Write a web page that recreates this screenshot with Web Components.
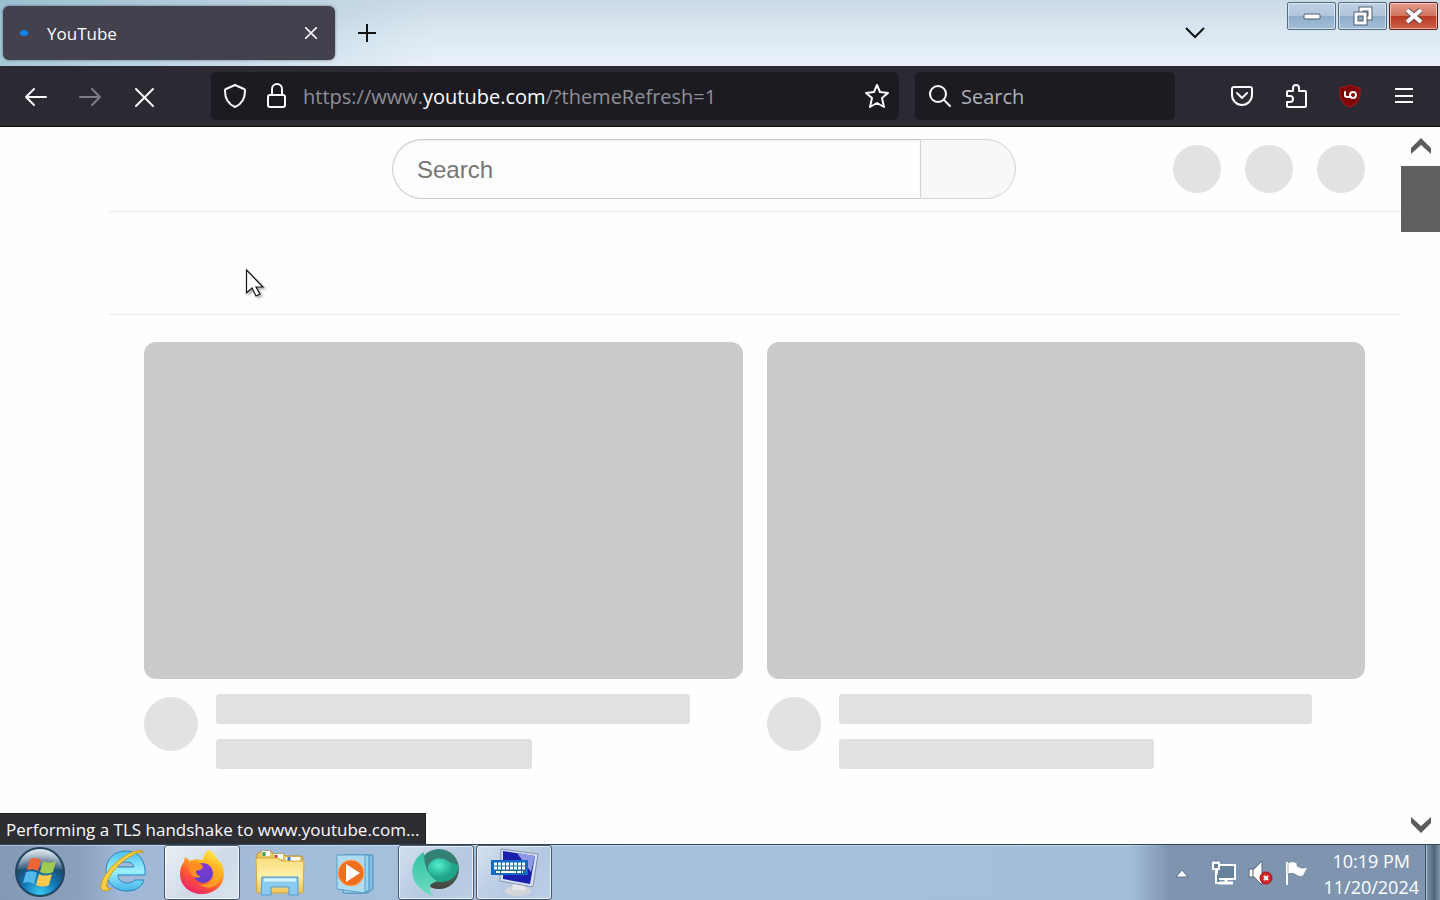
<!DOCTYPE html>
<html lang="en">
<head>
<meta charset="utf-8">
<title>YouTube</title>
<style>
  html, body {
    height: 100%;
    margin: 0;
  }

  body {
    font-family: "Open Sans", "Noto Sans", sans-serif;
    overflow: hidden;
  }
</style>
</head>
<body>
<desktop-screen>
  <tab-strip slot="window">
    <browser-tab label="YouTube"></browser-tab>
  </tab-strip>
  <nav-toolbar slot="window"></nav-toolbar>
  <page-view slot="window">
    <video-skeleton></video-skeleton>
    <video-skeleton></video-skeleton>
  </page-view>
  <task-bar slot="taskbar">
    <task-button label="Internet Explorer">
      <svg width="50" height="50" viewBox="0 0 50 50">
        <defs><linearGradient id="ie" x2="0" y2="1"><stop stop-color="#4cbdee"/><stop offset=".5" stop-color="#9cf0ff"/><stop offset="1" stop-color="#44b6ea"/></linearGradient></defs>
        <path d="M46 27H19c0 5 4 8 9 8 4 0 6-1 8-3h9c-3 8-9 11-17 11C16 43 7 35 7 23S15 3 27 3s20 9 19 24zM19 19h16c-1-4-4-5-8-5s-7 1-8 5z" fill="url(#ie)" stroke="#2a83bd"/>
        <path d="M45 5c-1-4-10-3-19 3C13 16 1 31 2 40c1 4 7 3 11 0-4 1-6 0-5-5C10 26 21 14 32 8c6-4 11-5 13-3z" fill="#f7d145" stroke="#cf9a18"/>
      </svg>
    </task-button>
    <task-button label="Firefox" active>
      <svg width="50" height="50" viewBox="0 0 50 50">
        <defs>
          <linearGradient id="fx" x1=".8" y1="0" x2=".25" y2="1"><stop stop-color="#fff04a"/><stop offset=".35" stop-color="#ffb321"/><stop offset=".65" stop-color="#ff5a33"/><stop offset="1" stop-color="#ea1f6e"/></linearGradient>
          <linearGradient id="fp" x2="0" y2="1"><stop stop-color="#8a35d8"/><stop offset="1" stop-color="#5a3fcd"/></linearGradient>
        </defs>
        <path d="M32 2c4 2 7 6 8 9 5 3 7 9 7 15 0 12-10 20-22 20S3 38 3 26c0-5 1-9 4-12l1-5 5 4c4-2 8-2 13-1 0-4 2-8 6-10z" fill="url(#fx)"/>
        <circle cx="26" cy="25" r="10" fill="url(#fp)"/>
        <path d="M12 15c5-2 10-1 14 3l-1 3-6 2c0 3 2 5 5 5-3 3-7 2-9-1-3-4-4-8-3-12z" fill="#ff8f22"/>
        <path d="M26 13c8 0 12 6 11 14-2 7-8 11-15 9 10 8 22 2 22-10 0-9-8-15-18-13z" fill="#ffb324" opacity=".7"/>
      </svg>
    </task-button>
    <task-button label="Windows Explorer">
      <svg width="52" height="50" viewBox="0 0 52 50">
        <defs><linearGradient id="fo" x2="0" y2="1"><stop stop-color="#f9dd80"/><stop offset=".5" stop-color="#ffefa6"/><stop offset="1" stop-color="#e9c65c"/></linearGradient></defs>
        <path d="M3 6l5-3h9l3 3h9l3 2h16l1 5v29H3z" fill="#eac564" stroke="#b99132"/>
        <path d="M8 3h8v5H8zM20 6h9v5h-9zM32 9h14v4H32z" fill="#fff"/>
        <path d="M10 4v4" stroke="#3b9d50" stroke-width="3"/>
        <path d="M22 7v4" stroke="#c2452d" stroke-width="3"/>
        <path d="M35 9v4" stroke="#3a76c4" stroke-width="3"/>
        <path d="M2 10h22l4 3h22l-1 32H3z" fill="url(#fo)" stroke="#d2aa43"/>
        <path d="M8 29h36v18H35v-8H17v8H7z" fill="#8ccaf0" stroke="#569bcb"/>
        <path d="M10 32h32" stroke="#d6f2ff" stroke-width="3"/>
      </svg>
    </task-button>
    <task-button label="Windows Media Player">
      <svg width="44" height="44" viewBox="0 0 44 44">
        <path d="M12 4h25v34l-5 4H12z" fill="#7dbfe3" stroke="#4a8fbe"/>
        <path d="M7 4h26v35l-5 3H7z" fill="#9bd3ef" stroke="#4a8fbe"/>
        <path d="M1 4h28v38L1 38z" fill="#b0dcf2" stroke="#5a9fc8"/>
        <circle cx="15" cy="22" r="13" fill="#ee6f1d" stroke="#ffad67"/>
        <path d="M10 13l14 9-14 9z" fill="#fff"/>
      </svg>
    </task-button>
    <task-button label="Browser" active>
      <svg width="52" height="50" viewBox="0 0 52 50">
        <defs>
          <radialGradient id="te" cx=".35" cy=".3"><stop stop-color="#55efcf"/><stop offset="1" stop-color="#1fa58a"/></radialGradient>
          <linearGradient id="ring" x2="0" y2="1"><stop stop-color="#2f8577"/><stop offset=".5" stop-color="#3e7a70"/><stop offset="1" stop-color="#493f3c"/></linearGradient>
          <linearGradient id="tail" x2="0" y2="1"><stop stop-color="#2fc2a2"/><stop offset="1" stop-color="#6fdcc2"/></linearGradient>
        </defs>
        <circle cx="29" cy="21" r="20" fill="url(#ring)"/>
        <path d="M18 18c4-8 13-10 20-5 4 3 7 2 10 4 0 13-10 18-19 17-7-1-12-8-11-16z" fill="url(#te)"/>
        <path d="M14 4C0 12-1 30 9 39c4 4 8 7 14 9-3-4-4-8-2-12l6-3c-9-5-13-15-13-29z" fill="url(#tail)"/>
      </svg>
    </task-button>
    <task-button label="On-Screen Keyboard" active>
      <svg width="50" height="50" viewBox="0 0 50 50">
        <ellipse cx="29" cy="43" rx="13" ry="5" fill="#d4d6da"/>
        <path d="M24 33h11l2 9H23z" fill="#e6e7ea"/>
        <path d="M12 1l37 5-5 33-33-6z" fill="#d8e0f1" stroke="#8492b5"/>
        <path d="M14 3l32 5-5 28-27-5z" fill="#1a1fae"/>
        <path d="M28 5l18 3-4 16z" fill="#8c9ae8"/>
        <path d="M2 12h37v15H2z" fill="#126ac0"/>
        <path d="M5 16h31M5 20h31" stroke="#fff" stroke-width="3" stroke-dasharray="3 1"/>
        <path d="M7 24h27" stroke="#fff" stroke-width="2" stroke-dasharray="4 1 15 1"/>
      </svg>
    </task-button>
  </task-bar>
</desktop-screen>

<script>
class DesktopScreen extends HTMLElement {
  constructor() {
    super();
    this.attachShadow({mode: 'open'}).innerHTML = `
      <style>
        :host {
          display: flex;
          flex-direction: column;
          height: 100vh;
          position: relative;
          background: #fefefe;
        }

        .window {
          flex: 1;
          min-height: 0;
          display: flex;
          flex-direction: column;
        }

        /* mouse pointer floats over the page */
        .pointer {
          position: absolute;
          left: 245px;
          top: 267px;
          pointer-events: none;
          filter: drop-shadow(2px 2px 1px rgba(0, 0, 0, 0.3));
        }
      </style>
      <div class="window"><slot name="window"></slot></div>
      <slot name="taskbar"></slot>
      <svg class="pointer" width="20" height="31" viewBox="0 0 20 31">
        <path d="M1.500 3v23l5.500-5 4 8 4-2-4-7h7z" fill="#fff" stroke="#111" stroke-width="1.200"/>
      </svg>
    `;
  }
}

class TabStrip extends HTMLElement {
  constructor() {
    super();
    this.attachShadow({mode: 'open'}).innerHTML = `
      <style>
        :host {
          display: flex;
          align-items: center;
          box-sizing: border-box;
          flex: none;
          height: 66px;
          padding: 0 2px 0 3px;
          background:
            linear-gradient(to right, rgba(120, 175, 195, 0.6), rgba(150, 190, 210, 0.4) 16%, rgba(200, 220, 235, 0) 30%),
            linear-gradient(to bottom, #cbdae6, #dae6f0 45%, #e2edf6 75%, #ebf0f9);
        }

        button {
          display: flex;
          align-items: center;
          justify-content: center;
          padding: 0;
          border: none;
          background: none;
        }

        .tool {
          width: 48px;
          height: 48px;
        }

        .new {
          margin: 0 auto 0 8px;
        }

        .controls {
          display: flex;
          align-self: flex-start;
          gap: 2px;
          margin: 2px 0 0 68px;
        }

        .controls button {
          box-sizing: border-box;
          width: 49px;
          height: 28px;
          border: 1px solid #536c86;
          border-radius: 2px;
          box-shadow: inset 0 0 0 1px rgba(255, 255, 255, 0.5);
          background: linear-gradient(#bdd0e5, #b0c6dc 48%, #8facc9 50%, #a3bfd9);
        }

        .controls .close {
          border-color: #5f2018;
          background: linear-gradient(#e09a8a, #d57761 48%, #b93820 50%, #cc604a);
        }
      </style>
      <slot></slot>
      <button class="tool new" type="button" aria-label="New tab">
        <svg width="20" height="20" viewBox="0 0 20 20"><path d="M10 1v18M1 10h18" stroke="#111" stroke-width="2"/></svg>
      </button>
      <button class="tool" type="button" aria-label="List all tabs">
        <svg width="20" height="14" viewBox="0 0 20 14"><path d="M1 2l9 9 9-9" fill="none" stroke="#111" stroke-width="2"/></svg>
      </button>
      <div class="controls">
        <button type="button" aria-label="Minimize">
          <svg width="18" height="8" viewBox="0 0 18 8"><rect x="1" y="2" width="16" height="5" rx="1" fill="#fff" stroke="#4c5c70"/></svg>
        </button>
        <button type="button" aria-label="Restore">
          <svg width="22" height="22" viewBox="0 0 22 22">
            <path d="M9 4h9v9H9z" fill="none" stroke="#4c5c70" stroke-width="5"/>
            <path d="M9 4h9v9H9z" fill="none" stroke="#fff" stroke-width="3"/>
            <path d="M4 9h9v9H4z" fill="#8fa9c6" stroke="#4c5c70" stroke-width="5"/>
            <path d="M4 9h9v9H4z" fill="none" stroke="#fff" stroke-width="3"/>
          </svg>
        </button>
        <button class="close" type="button" aria-label="Close">
          <svg width="20" height="18" viewBox="0 0 20 18">
            <path d="M3 3l14 12M17 3L3 15" stroke="#6b4a48" stroke-width="6"/>
            <path d="M3 3l14 12M17 3L3 15" stroke="#fff" stroke-width="4"/>
          </svg>
        </button>
      </div>
    `;
  }
}

class BrowserTab extends HTMLElement {
  constructor() {
    super();
    this.attachShadow({mode: 'open'}).innerHTML = `
      <style>
        :host {
          display: flex;
          align-items: center;
          box-sizing: border-box;
          width: 332px;
          height: 54px;
          padding: 0 12px 0 17px;
          border-radius: 6px;
          background: #42414d;
          box-shadow: 0 0 3px rgba(60, 50, 80, 0.6);
          color: #fbfbfe;
          font-size: 17px;
        }

        .busy {
          width: 8px;
          height: 6px;
          border-radius: 50%;
          background: #1683e8;
        }

        #label {
          flex: 1;
          margin-left: 19px;
        }

        button {
          display: flex;
          padding: 6px;
          border: none;
          background: none;
        }
      </style>
      <span class="busy"></span>
      <span id="label"></span>
      <button type="button" aria-label="Close tab">
        <svg width="12" height="12" viewBox="0 0 12 12"><path d="M0 0l12 12M12 0L0 12" stroke="#fbfbfe" stroke-width="1.600"/></svg>
      </button>
    `;
  }

  connectedCallback() {
    this.shadowRoot.querySelector('#label').textContent = this.getAttribute('label');
  }
}

class NavToolbar extends HTMLElement {
  constructor() {
    super();
    this.attachShadow({mode: 'open'}).innerHTML = `
      <style>
        :host {
          display: flex;
          align-items: center;
          box-sizing: border-box;
          flex: none;
          gap: 40px;
          height: 61px;
          padding: 0 9px;
          border-bottom: 1px solid #0c0c0d;
          background: #2b2a33;
          color: #fbfbfe;
        }

        svg {
          fill: none;
          stroke: #fbfbfe;
          stroke-width: 2;
          stroke-linecap: round;
          stroke-linejoin: round;
        }

        button {
          display: flex;
          align-items: center;
          justify-content: center;
          padding: 0;
          border: none;
          background: none;
        }

        .group {
          display: flex;
        }

        .group button {
          width: 54px;
          height: 48px;
        }

        .group button:disabled {
          opacity: 0.4;
        }

        .fields {
          flex: 1;
          min-width: 0;
          display: flex;
          gap: 16px;
        }

        .field {
          flex: 668;
          min-width: 0;
          display: flex;
          align-items: center;
          box-sizing: border-box;
          height: 48px;
          padding: 0 10px;
          border-radius: 6px;
          background: #1c1b22;
        }

        .field.search {
          flex: 240;
        }

        .field button {
          margin-right: 13px;
        }

        .field .star {
          margin-right: 0;
        }

        .url {
          flex: 1;
          padding-top: 2px;
          white-space: nowrap;
          font-size: 20px;
          line-height: 28px;
          color: #8f8f98;
          text-decoration: none;
        }

        .url b {
          font-weight: 400;
          color: #fbfbfe;
        }

        input {
          flex: 1;
          min-width: 0;
          padding: 2px 0 0;
          border: none;
          outline: none;
          background: none;
          font: 20px "Open Sans", "Noto Sans", sans-serif;
          line-height: 28px;
          color: #fbfbfe;
        }

        input::placeholder {
          color: #b0b0b8;
          opacity: 1;
        }

        .field.search button {
          margin-right: 8px;
        }
      </style>
      <div class="group">
        <button type="button" aria-label="Back"><svg width="24" height="24" viewBox="0 0 24 24"><path d="M22 13H2M10 5l-8 8 8 8"/></svg></button>
        <button type="button" aria-label="Forward" disabled><svg width="24" height="24" viewBox="0 0 24 24"><path d="M2 13h20M14 5l8 8-8 8"/></svg></button>
        <button type="button" aria-label="Stop"><svg width="24" height="24" viewBox="0 0 24 24"><path d="M4 5l17 17M21 5L4 22"/></svg></button>
      </div>
      <div class="fields">
        <div class="field">
          <button type="button" aria-label="Tracking protection"><svg width="28" height="28" viewBox="0 0 28 28"><path d="M14 3l9 4c1 0 1 1 1 2 0 8-3 13-10 16C7 22 4 17 4 9c0-1 0-2 1-2z"/></svg></button>
          <button type="button" aria-label="Site security"><svg width="28" height="28" viewBox="0 0 28 28"><rect x="6" y="13" width="17" height="12" rx="2"/><path d="M10 13V7a5 5 0 0 1 10 0v6"/></svg></button>
          <a class="url" href="#">https://www.<b>youtube.com</b>/?themeRefresh=1</a>
          <button class="star" type="button" aria-label="Bookmark this page"><svg width="26" height="26" viewBox="0 0 26 26"><path d="M14 2l3 7 8 1-6 5 2 9-7-4-7 4 2-9-6-5 8-1z"/></svg></button>
        </div>
        <div class="field search">
          <button type="button" aria-label="Search engine"><svg width="28" height="28" viewBox="0 0 28 28"><circle cx="13" cy="12" r="8"/><path d="M19 18l6 6"/></svg></button>
          <input type="text" placeholder="Search" aria-label="Search the web">
        </div>
      </div>
      <div class="group">
        <button type="button" aria-label="Save to Pocket"><svg width="24" height="24" viewBox="0 0 24 24"><path d="M4 3h16c1 0 2 1 2 2v6a10 10 0 0 1-20 0V5c0-1 1-2 2-2z"/><path d="M7 9l5 5 5-5"/></svg></button>
        <button type="button" aria-label="Extensions"><svg width="26" height="26" viewBox="0 0 26 26"><path d="M5 8h5V5a3 3 0 0 1 6 0v3h6a1 1 0 0 1 1 1v14a1 1 0 0 1-1 1H5a1 1 0 0 1-1-1v-4h3a3 3 0 0 0 0-6H4V9a1 1 0 0 1 1-1z"/></svg></button>
        <button type="button" aria-label="uBlock Origin"><svg width="26" height="26" viewBox="0 0 26 26"><path d="M13 2c3 2 6 3 10 3 0 9-1 15-10 19C4 20 3 14 3 5c4 0 7-1 10-3z" fill="#800000" stroke="#8d1717"/><path d="M8 9v3a2 2 0 0 0 2 2h4"/><circle cx="16" cy="12" r="3"/></svg></button>
        <button type="button" aria-label="Menu"><svg width="24" height="24" viewBox="0 0 24 24"><path d="M3 5h18M3 12h18M3 18h18" stroke-linecap="butt"/></svg></button>
      </div>
    `;
  }
}

class PageView extends HTMLElement {
  constructor() {
    super();
    this.attachShadow({mode: 'open'}).innerHTML = `
      <style>
        :host {
          flex: 1;
          min-height: 0;
          display: flex;
          position: relative;
          background: #fefefe;
        }

        .page {
          flex: 1;
          min-width: 0;
          overflow: hidden;
        }

        header {
          display: grid;
          grid-template-columns: 1fr minmax(0, 624px) 1fr;
          align-items: center;
          height: 84px;
          padding: 0 36px 0 43px;
        }

        form {
          grid-column: 2;
          display: flex;
        }

        input {
          flex: 1;
          min-width: 0;
          box-sizing: border-box;
          height: 60px;
          padding: 2px 24px 0;
          border: 1px solid #ccc;
          border-right: none;
          border-radius: 30px 0 0 30px;
          outline: none;
          background: #fefefe;
          box-shadow: inset 0 1px 2px #eee;
          font: 24px "Liberation Sans", Arial, sans-serif;
        }

        input::placeholder {
          color: #757575;
          opacity: 1;
        }

        form button {
          width: 96px;
          border: 1px solid #d3d3d3;
          border-radius: 0 30px 30px 0;
          background: #f8f8f8;
        }

        .account {
          display: flex;
          justify-content: flex-end;
          gap: 24px;
        }

        .account span {
          width: 48px;
          height: 48px;
          border-radius: 50%;
          background: #e2e2e2;
        }

        .chips {
          height: 102px;
          margin-left: 108px;
          border: solid #ececec;
          border-width: 1px 0;
        }

        .videos {
          display: grid;
          grid-template-columns: 1fr 1fr;
          gap: 24px;
          margin-left: 108px;
          padding: 27px 36px 0;
        }

        .scrollbar {
          flex: none;
          display: flex;
          flex-direction: column;
          width: 39px;
        }

        .scrollbar button {
          display: flex;
          align-items: center;
          justify-content: center;
          height: 39px;
          padding: 0;
          border: none;
          background: none;
        }

        .thumb {
          height: 66px;
          margin-bottom: auto;
          background: #606060;
        }

        .status {
          position: absolute;
          left: 0;
          bottom: 0;
          box-sizing: border-box;
          height: 31px;
          padding: 0 6px;
          border: solid #1d1d22;
          border-width: 1px 1px 0 0;
          background: #2e2e32;
          color: #fbfbfe;
          font-size: 17px;
          line-height: 31px;
          white-space: nowrap;
        }
      </style>
      <div class="page">
        <header>
          <form>
            <input type="text" placeholder="Search" aria-label="Search YouTube">
            <button type="button" aria-label="Search"></button>
          </form>
          <div class="account"><span></span><span></span><span></span></div>
        </header>
        <div class="chips"></div>
        <div class="videos"><slot></slot></div>
      </div>
      <div class="scrollbar">
        <button type="button" aria-label="Scroll up"><svg width="20" height="18" viewBox="0 0 20 18"><path d="M10 0l10 10v6L10 7 0 16v-6z" fill="#5c5c5c"/></svg></button>
        <div class="thumb"></div>
        <button type="button" aria-label="Scroll down"><svg width="20" height="18" viewBox="0 0 20 18"><path d="M10 17l10-10V1L10 10 0 1v6z" fill="#5c5c5c"/></svg></button>
      </div>
      <div class="status">Performing a TLS handshake to www.youtube.com...</div>
    `;
  }
}

class VideoSkeleton extends HTMLElement {
  constructor() {
    super();
    this.attachShadow({mode: 'open'}).innerHTML = `
      <style>
        :host {
          display: block;
        }

        .thumbnail {
          aspect-ratio: 16 / 9;
          border-radius: 12px;
          background: #cbcbcb;
        }

        .details {
          display: flex;
          gap: 18px;
          padding-top: 15px;
        }

        .avatar {
          width: 54px;
          height: 54px;
          margin-top: 3px;
          border-radius: 50%;
          background: #e2e2e2;
        }

        .meta {
          flex: 1;
        }

        .line {
          width: 90%;
          height: 30px;
          margin-bottom: 15px;
          border-radius: 3px;
          background: #e1e1e1;
        }

        .line.short {
          width: 60%;
        }
      </style>
      <div class="thumbnail"></div>
      <div class="details">
        <div class="avatar"></div>
        <div class="meta">
          <div class="line"></div>
          <div class="line short"></div>
        </div>
      </div>
    `;
  }
}

class TaskButton extends HTMLElement {
  constructor() {
    super();
    this.attachShadow({mode: 'open'}).innerHTML = `
      <style>
        :host {
          display: block;
          width: 76px;
        }

        button {
          display: flex;
          align-items: center;
          justify-content: center;
          box-sizing: border-box;
          width: 100%;
          height: 55px;
          padding: 0;
          border: 1px solid transparent;
          border-radius: 3px;
          background: none;
        }

        :host([active]) button {
          border-color: #46586e;
          box-shadow: inset 0 0 0 1px rgba(255, 255, 255, 0.7);
          background: linear-gradient(135deg, #d3dfef, #b4c8e0 60%, #bccfe5);
        }

        :host([label="Firefox"]) button {
          background: linear-gradient(135deg, #eaeff6, #cfdae7 60%, #dbe4ee);
        }
      </style>
      <button type="button"><slot></slot></button>
    `;
  }

  connectedCallback() {
    this.shadowRoot.querySelector('button').setAttribute('aria-label', this.getAttribute('label'));
  }
}

class TaskBar extends HTMLElement {
  constructor() {
    super();
    this.attachShadow({mode: 'open'}).innerHTML = `
      <style>
        :host {
          display: flex;
          box-sizing: border-box;
          flex: none;
          height: 56px;
          border-top: 1px solid #33475c;
          box-shadow: inset 0 1px 0 rgba(255, 255, 255, 0.35);
          background: linear-gradient(to right, #8399b5, #8ba0bd 80px, #a0b8d6 120px, #a6bfdc 400px, #a5bfdb);
        }

        button {
          padding: 0;
          border: none;
          background: none;
        }

        .start {
          display: flex;
          align-items: center;
          justify-content: center;
          width: 80px;
        }

        .tasks {
          flex: 1;
          display: flex;
          gap: 2px;
          padding-left: 6px;
        }

        .tray {
          display: flex;
          align-items: center;
          gap: 10px;
          padding: 0 6px 0 46px;
          background: linear-gradient(to right, rgba(127, 149, 175, 0), #7f95af 40px);
        }

        .tray button {
          display: flex;
        }

        .more {
          margin-right: 12px;
        }

        .clock {
          margin-left: 4px;
          padding-top: 2px;
          text-align: center;
          color: #fff;
          font-size: 18px;
          line-height: 26px;
        }

        .desktop {
          width: 15px;
          border: 1px solid #3c5266;
          border-width: 0 0 0 1px;
          box-shadow: inset 1px 0 0 #a9bccd;
          background: linear-gradient(to right, #7f97ab, #4f6679 60%, #8398a9);
        }
      </style>
      <button class="start" type="button" aria-label="Start">
        <svg width="52" height="52" viewBox="0 0 52 52">
          <defs>
            <radialGradient id="orb" cx=".5" cy=".95" r=".9"><stop stop-color="#37c8f5"/><stop offset=".4" stop-color="#1278b5"/><stop offset=".75" stop-color="#1d4568"/><stop offset="1" stop-color="#7ba0b9"/></radialGradient>
            <linearGradient id="shine" x2="0" y2="1"><stop stop-color="#fff" stop-opacity=".75"/><stop offset="1" stop-color="#fff" stop-opacity=".1"/></linearGradient>
          </defs>
          <circle cx="26" cy="25" r="24" fill="url(#orb)" stroke="#24445e" stroke-width="2"/>
          <path d="M4 23a22 21 0 0 1 44 0c-12-4-30-4-44 0z" fill="url(#shine)"/>
          <path d="M16 12c4-2 8-1 11 1l-3 11c-4-2-7-2-11-1z" fill="#ee6536"/>
          <path d="M29 14c4 2 8 2 13 0l-3 11c-5 2-9 2-13 0z" fill="#a0ca51"/>
          <path d="M12 25c4-1 8-1 11 1l-3 11c-4-2-7-2-11-1z" fill="#55b8ec"/>
          <path d="M25 27c4 2 8 2 13 0l-3 11c-5 2-9 2-13 0z" fill="#fdc94a"/>
        </svg>
      </button>
      <div class="tasks"><slot></slot></div>
      <div class="tray">
        <button class="more" type="button" aria-label="Show hidden icons"><svg width="14" height="10" viewBox="0 0 14 10"><path d="M7 2l6 7H1z" fill="#fff" stroke="#5a6f85"/></svg></button>
        <button type="button" aria-label="Network"><svg width="26" height="26" viewBox="0 0 26 26"><path d="M6 5h18v14H6z" fill="#67809b" stroke="#fff" stroke-width="2"/><path d="M15 19v4M8 23h14" stroke="#fff" stroke-width="3"/><path d="M2 3h6v6H2zM5 9v14h4" fill="#67809b" stroke="#fff" stroke-width="2"/><path d="M3 1v3M7 1v3" stroke="#fff"/></svg></button>
        <button type="button" aria-label="Volume"><svg width="26" height="26" viewBox="0 0 26 26"><path d="M2 9h5l8-8v24l-8-8H2z" fill="#fff" stroke="#50657c"/><path d="M6 9v8" stroke="#50657c"/><circle cx="19" cy="18" r="6" fill="#d62626" stroke="#9c1616"/><path d="M17 16l4 4M21 16l-4 4" stroke="#fff" stroke-width="2"/></svg></button>
        <button type="button" aria-label="Action Center"><svg width="26" height="26" viewBox="0 0 26 26"><path d="M4 2v23" stroke="#fff" stroke-width="2"/><path d="M5 3c4-2 6-1 9 0v3c3 2 6 3 11 1l-5 9c-3 1-6 0-8-2-2-1-5-1-7 0z" fill="#fff" stroke="#50657c" stroke-width=".5"/></svg></button>
        <div class="clock">
          <div>10:19 PM</div>
          <div>11/20/2024</div>
        </div>
      </div>
      <button class="desktop" type="button" aria-label="Show desktop"></button>
    `;
  }
}

customElements.define('desktop-screen', DesktopScreen);
customElements.define('tab-strip', TabStrip);
customElements.define('browser-tab', BrowserTab);
customElements.define('nav-toolbar', NavToolbar);
customElements.define('page-view', PageView);
customElements.define('video-skeleton', VideoSkeleton);
customElements.define('task-button', TaskButton);
customElements.define('task-bar', TaskBar);
</script>
</body>
</html>
